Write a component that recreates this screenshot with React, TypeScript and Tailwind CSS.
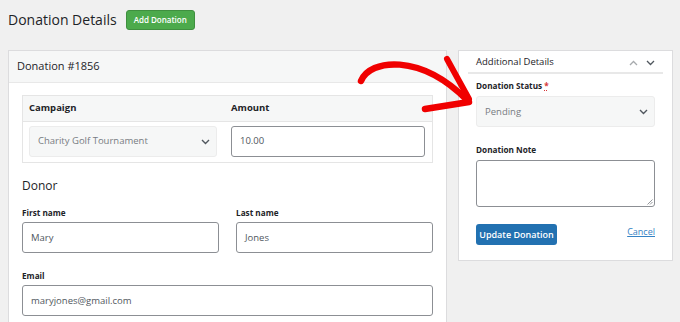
import React from 'react';

const font = { fontFamily: '"Open Sans", "Noto Sans", sans-serif' };

function Chevron({ className = '' }: { className?: string }) {
	return (
		<svg width="9" height="6" viewBox="0 0 9 6" className={className}>
			<path d="M1 1l3.5 3.5L8 1" fill="none" stroke="#50575e" strokeWidth="1.4" />
		</svg>
	);
}

function Label({ children }: { children: React.ReactNode }) {
	return <div className="text-[8.2px] font-bold text-[#1d2327] leading-none">{children}</div>;
}

function TextBox({ value, className = '' }: { value: string; className?: string }) {
	return (
		<div
			className={`flex items-center h-[31px] px-[8px] bg-white border border-[#8c8f94] rounded-[3px] text-[9.5px] text-[#50575e] ${className}`}
		>
			{value}
		</div>
	);
}

function SelectBox({ value, className = '' }: { value: string; className?: string }) {
	return (
		<div
			className={`flex items-center justify-between h-[31px] pl-[8px] pr-[6px] bg-[#f6f7f7] border border-[#ececec] rounded-[3px] text-[9.5px] text-[#787c82] ${className}`}
		>
			<span>{value}</span>
			<Chevron />
		</div>
	);
}

export default function App() {
	return (
		<div className="relative w-[680px] h-[322px] overflow-hidden bg-[#f0f0f0]" style={font}>
			<div className="flex items-center gap-[9px] pl-[8px] pt-[6px] h-[27px] box-content">
				<h1 className="text-[14px] text-[#1d2327] leading-none">Donation Details</h1>
				<button className="h-[20px] px-[7px] bg-[#4caa4c] border border-[#3f8f3f] rounded-[3px] text-[8px] font-semibold text-white leading-none">
					Add Donation
				</button>
			</div>

			<div className="flex items-start pl-[8px] mt-[17px]">
				{/* main card */}
				<div className="w-[439px] h-[300px] bg-white border border-[#dcdcde]">
					<div className="flex items-center h-[32px] pl-[8px] bg-[#f6f7f7] border-b border-[#e8e8e8]">
						<span className="text-[11px] font-medium text-[#1d2327]">Donation #1856</span>
					</div>
					<div className="px-[13px] pt-[12px]">
						<div className="border border-[#e5e5e5]">
							<div className="grid grid-cols-[188px_194px] gap-[14px] items-center h-[26px] px-[6px] bg-[#f6f7f7] border-b border-[#e5e5e5] text-[9.5px] font-bold text-[#1d2327]">
								<span>Campaign</span>
								<span>Amount</span>
							</div>
							<div className="grid grid-cols-[188px_194px] gap-[14px] px-[6px] pt-[4px] pb-[5px]">
								<SelectBox value="Charity Golf Tournament" />
								<TextBox value="10.00" className="text-[#2c3338]" />
							</div>
						</div>

						<div className="mt-[17px] text-[12px] text-[#1d2327] leading-none">Donor</div>

						<div className="grid grid-cols-2 gap-[17px] mt-[17px]">
							<div>
								<Label>First name</Label>
								<TextBox value="Mary" className="mt-[5px]" />
							</div>
							<div>
								<Label>Last name</Label>
								<TextBox value="Jones" className="mt-[5px]" />
							</div>
						</div>

						<div className="mt-[19px]">
							<Label>Email</Label>
							<TextBox value="maryjones@gmail.com" className="mt-[5px]" />
						</div>
					</div>
				</div>

				{/* side card */}
				<div className="w-[215px] ml-[11px] bg-white border border-[#dcdcde] px-[9px] pb-[15px]">
					<div className="flex items-center justify-between h-[23px] px-[8px] pt-[2px] border-b-2 border-[#e8e8e8]">
						<span className="text-[9.5px] text-[#1d2327]">Additional Details</span>
						<div className="flex items-center gap-[8px]">
							<svg width="9" height="6" viewBox="0 0 9 6">
								<path d="M1 5l3.5-3.5L8 5" fill="none" stroke="#a7aaad" strokeWidth="1.3" />
							</svg>
							<svg width="9" height="6" viewBox="0 0 9 6">
								<path d="M1 1l3.5 3.5L8 1" fill="none" stroke="#50575e" strokeWidth="1.3" />
							</svg>
						</div>
					</div>
					<div className="px-[8px]">
						<div className="mt-[8px]">
							<Label>
								Donation Status <span className="text-[#d63638] underline decoration-dotted">*</span>
							</Label>
						</div>
						<SelectBox value="Pending" className="mt-[6px] h-[31px]" />

						<div className="mt-[19px]">
							<Label>Donation Note</Label>
						</div>
						<div className="relative mt-[6px] h-[47px] border border-[#8c8f94] rounded-[3px] bg-white">
							<svg width="6" height="6" viewBox="0 0 6 6" className="absolute right-[1px] bottom-[1px]">
								<path d="M0.5 5.5l5-5M3 5.5l2.5-2.5" stroke="#787c82" strokeWidth="0.8" />
							</svg>
						</div>

						<div className="flex items-center justify-between mt-[17px]">
							<button className="h-[21px] w-[81px] bg-[#2271b1] rounded-[3px] text-[9px] font-semibold text-white leading-none">
								Update Donation
							</button>
							<a href="#" className="-mt-[6px] text-[9px] text-[#3582c4] underline">
								Cancel
							</a>
						</div>
					</div>
				</div>
			</div>

			{/* red annotation arrow */}
			<svg className="absolute left-0 top-0 pointer-events-none" width="680" height="322" viewBox="0 0 680 322">
				<g fill="none" stroke="#f00000" strokeLinecap="round" strokeLinejoin="round">
					<path d="M361 81 C 370 59, 420 53, 467 100" strokeWidth="6.5" />
					<path d="M447 59 L 469 99" strokeWidth="6" />
					<path d="M425 109 L 469 102" strokeWidth="6.5" />
				</g>
			</svg>
		</div>
	);
}
